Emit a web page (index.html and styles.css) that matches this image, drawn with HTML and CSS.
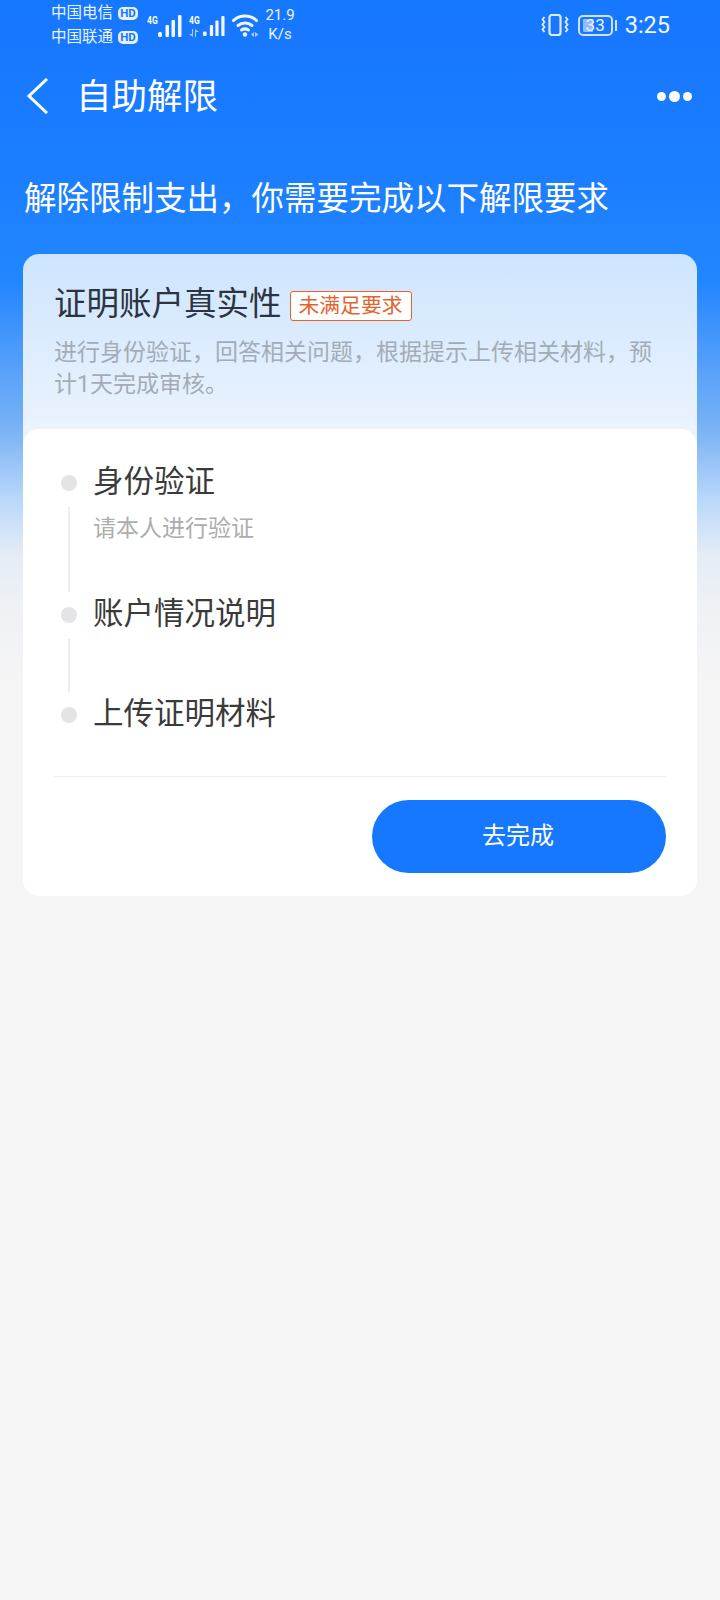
FILE: index.html
```html
<!DOCTYPE html>
<html lang="zh-CN">
<head>
  <meta charset="UTF-8">
  <meta name="viewport" content="width=device-width, initial-scale=1.0">
  <title>自助解限</title>
  <link rel="stylesheet" href="styles.css">
</head>
<body>

<div class="page">
  <div class="status-bar">
    <div class="carriers">
      <div class="carrier">中国电信<span class="hd">HD</span></div>
      <div class="carrier">中国联通<span class="hd">HD</span></div>
    </div>
    <div class="signal">
      <span class="net net-one">4G</span>
      <svg width="24" height="22" viewBox="0 0 24 22" fill="#f2f7ff">
        <rect x="0" y="17" width="4" height="5" rx="1.500"/>
        <rect x="7.500" y="10" width="3.500" height="12" rx="1"/>
        <rect x="13.500" y="5" width="3.500" height="17" rx="1"/>
        <rect x="20" y="0" width="3.500" height="22" rx="1"/>
      </svg>
    </div>
    <div class="signal signal-two">
      <span class="net">4G</span>
      <svg class="arrows" width="11" height="8" viewBox="0 0 11 8" fill="#a9cbff">
        <path d="M4 0v8L0 5h3V0zM6 8V0l4 3H7v5z"/>
      </svg>
      <svg width="22" height="22" viewBox="0 0 24 22" fill="#f2f7ff">
        <rect x="0" y="17" width="4" height="5" rx="1.500"/>
        <rect x="7.500" y="10" width="3.500" height="12" rx="1"/>
        <rect x="13.500" y="5" width="3.500" height="17" rx="1"/>
        <rect x="20" y="0" width="3.500" height="22" rx="1"/>
      </svg>
    </div>
    <svg class="wifi" width="27" height="23" viewBox="0 0 27 23" fill="none" stroke="#f2f7ff" stroke-width="3" stroke-linecap="round">
      <path d="M1.500 6.500C7.500 0.500 18.500 0.500 24.500 6.500"/>
      <path d="M6 11.500c4-3.400 10-3.400 14 0"/>
      <path d="M9.500 16c2-1.300 5-1.300 7 0"/>
      <circle cx="13" cy="20.500" r="2.200" fill="#f2f7ff" stroke="none"/>
      <path d="M19 20.500l3-2.500v5zM23 18l3.500 2.500L23 23z" fill="#a9cbff" stroke="none"/>
    </svg>
    <div class="speed">21.9<br>K/s</div>
    <div class="status-right">
      <svg class="vibrate" width="28" height="22" viewBox="0 0 28 22" fill="none" stroke="#dfecff" stroke-width="2.200">
        <rect x="8.500" y="1" width="11" height="20" rx="2.500"/>
        <path d="M3.500 3L1.500 5.500l2 2.500-2 2.500 2 2.500-2 2.500 2 2.500M24.500 3l2 2.500-2 2.500 2 2.500-2 2.500 2 2.500-2 2.500" stroke-width="1.800"/>
      </svg>
      <div class="battery">
        <div class="battery-body"><span class="battery-fill"></span><span class="battery-num">33</span></div>
        <span class="battery-cap"></span>
      </div>
      <span class="clock">3:25</span>
    </div>
  </div>

  <div class="nav-bar">
    <svg class="back" width="22" height="36" viewBox="0 0 22 36" fill="none" stroke="#fff" stroke-width="3">
      <path d="M21 1L3 18l18 17"/>
    </svg>
    <div class="nav-title">自助解限</div>
    <div class="more"><i></i><i class="mid"></i><i></i></div>
  </div>

  <div class="headline">解除限制支出，你需要完成以下解限要求</div>

  <div class="card">
    <div class="card-head">
      <div class="card-title">证明账户真实性<span class="badge">未满足要求</span></div>
      <div class="card-desc">进行身份验证，回答相关问题，根据提示上传相关材料，预计1天完成审核。</div>
    </div>
    <div class="card-body">
      <div class="steps">
        <div class="step step-first">
          <div class="rail"><span class="dot"></span><span class="line"></span></div>
          <div class="step-text">
            <div class="step-name">身份验证</div>
            <div class="step-tip">请本人进行验证</div>
          </div>
        </div>
        <div class="step step-second">
          <div class="rail"><span class="dot"></span><span class="line"></span></div>
          <div class="step-text">
            <div class="step-name">账户情况说明</div>
          </div>
        </div>
        <div class="step step-last">
          <div class="rail"><span class="dot"></span></div>
          <div class="step-text">
            <div class="step-name">上传证明材料</div>
          </div>
        </div>
      </div>
      <div class="actions">
        <button class="go-btn">去完成</button>
      </div>
    </div>
  </div>
</div>

</body>
</html>
```

FILE: styles.css
```css
* {
  box-sizing: border-box;
}

body {
  margin: 0;
  background-color: #f5f5f6;
  font-family: "Roboto", "Noto Sans CJK SC", sans-serif;
  color: #333;
}

.page {
  min-height: 1600px;
  background: linear-gradient(180deg, #1677ff 0, #1a7cff 150px, #2286ff 280px, #7ab3f5 430px, #b9d8fb 500px, #e5ecf6 555px, #eff1f5 610px, #f5f5f6 680px);
}

/* status bar */
.status-bar {
  display: flex;
  align-items: center;
  height: 50px;
  padding: 0 50px 0 51px;
  color: #fff;
}

.carriers {
  width: 88px;
  font-size: 15.500px;
  line-height: 24px;
  color: #eaf3ff;
  white-space: nowrap;
}

.carrier {
  display: flex;
  align-items: center;
}

.hd {
  margin-left: 5px;
  width: 20px;
  height: 13px;
  border-radius: 5px;
  background-color: #e6f0ff;
  color: #1677ff;
  font-size: 11.500px;
  font-weight: 700;
  line-height: 13px;
  text-align: center;
}

.signal {
  display: flex;
  align-items: flex-end;
  position: relative;
  margin-left: 8px;
  height: 24px;
}

.signal-two {
  margin-left: 7px;
}

.net {
  align-self: flex-start;
  margin-top: 2px;
  width: 14px;
  font-size: 10px;
  font-weight: 700;
  transform: scaleX(0.85);
  transform-origin: left;
}

.net-one {
  width: 11px;
}

.arrows {
  position: absolute;
  left: 0;
  bottom: 0;
}

.wifi {
  margin-left: 7px;
}

.speed {
  margin-left: 3px;
  width: 36px;
  font-size: 15px;
  line-height: 19px;
  text-align: center;
  color: #eaf3ff;
}

.status-right {
  display: flex;
  align-items: center;
  margin-left: auto;
}

.battery {
  display: flex;
  align-items: center;
  margin-left: 9px;
}

.battery-body {
  position: relative;
  width: 35px;
  height: 21px;
  border: 2px solid #cfe2ff;
  border-radius: 5px;
}

.battery-fill {
  position: absolute;
  left: 3px;
  top: 2px;
  bottom: 2px;
  width: 10px;
  background-color: #8fbcff;
  border-radius: 1px;
}

.battery-num {
  position: absolute;
  inset: 0;
  font-size: 17px;
  line-height: 17px;
  text-align: center;
  color: #eaf3ff;
}

.battery-cap {
  margin-left: 2px;
  width: 2px;
  height: 11px;
  background-color: #cfe2ff;
}

.clock {
  margin-left: 8px;
  font-size: 23.500px;
  color: #f0f6ff;
}

/* nav */
.nav-bar {
  display: flex;
  align-items: center;
  height: 92px;
  padding: 0 28px 0 26px;
  color: #fff;
}

.nav-title {
  margin-left: 28px;
  padding-bottom: 5px;
  font-size: 35.500px;
}

.more {
  display: flex;
  align-items: center;
  gap: 3px;
  margin-left: auto;
}

.more i {
  width: 9px;
  height: 9px;
  border-radius: 50%;
  background-color: #fff;
}

.more .mid {
  width: 11px;
  height: 11px;
}

.headline {
  margin-top: 35px;
  padding-left: 24px;
  font-size: 32.500px;
  line-height: 44px;
  color: #fff;
  white-space: nowrap;
}

/* card */
.card {
  margin: 33px 23px 0;
  border-radius: 16px;
  background: linear-gradient(180deg, #cee4fe 0, #edf5fe 191px);
}

.card-head {
  padding: 30px 30px 0 31px;
  height: 175px;
}

.card-title {
  display: flex;
  align-items: center;
  font-size: 32.500px;
  line-height: 40px;
  color: #2b3440;
}

.badge {
  margin: 4px 0 0 8px;
  padding: 0 8px;
  height: 30px;
  font-size: 20.800px;
  line-height: 28px;
  color: #e4632d;
  background-color: #fff;
  border: 1px solid #e4632d;
  border-radius: 3px;
}

.card-desc {
  margin-top: 13px;
  font-size: 23px;
  line-height: 32px;
  color: #a3acb6;
}

.card-body {
  padding: 31px 31px 23px;
  background-color: #fff;
  border-radius: 16px;
}

.step {
  display: flex;
}

.step-first {
  height: 132px;
}

.step-second {
  height: 100px;
}

.step-last {
  height: 84px;
}

.rail {
  display: flex;
  flex-direction: column;
  align-items: center;
  width: 16px;
  margin-left: 7px;
  padding-top: 15px;
}

.dot {
  flex: none;
  width: 16px;
  height: 16px;
  border-radius: 50%;
  background-color: #e4e4e6;
}

.line {
  margin-top: 16px;
  width: 2px;
  flex: 1;
  background-color: #ededef;
}

.step-text {
  margin-left: 16px;
}

.step-name {
  font-size: 30.500px;
  line-height: 44px;
  color: #3a3a3a;
}

.step-tip {
  margin-top: 9px;
  font-size: 23px;
  line-height: 32px;
  color: #adadad;
}

.actions {
  display: flex;
  justify-content: flex-end;
  padding-top: 23px;
  border-top: 1px solid #eeeeef;
}

.go-btn {
  width: 294px;
  height: 73px;
  padding: 0 2px 6px 0;
  border: none;
  border-radius: 37px;
  background-color: #1677ff;
  color: #fff;
  font-family: inherit;
  font-size: 24px;
}
```
